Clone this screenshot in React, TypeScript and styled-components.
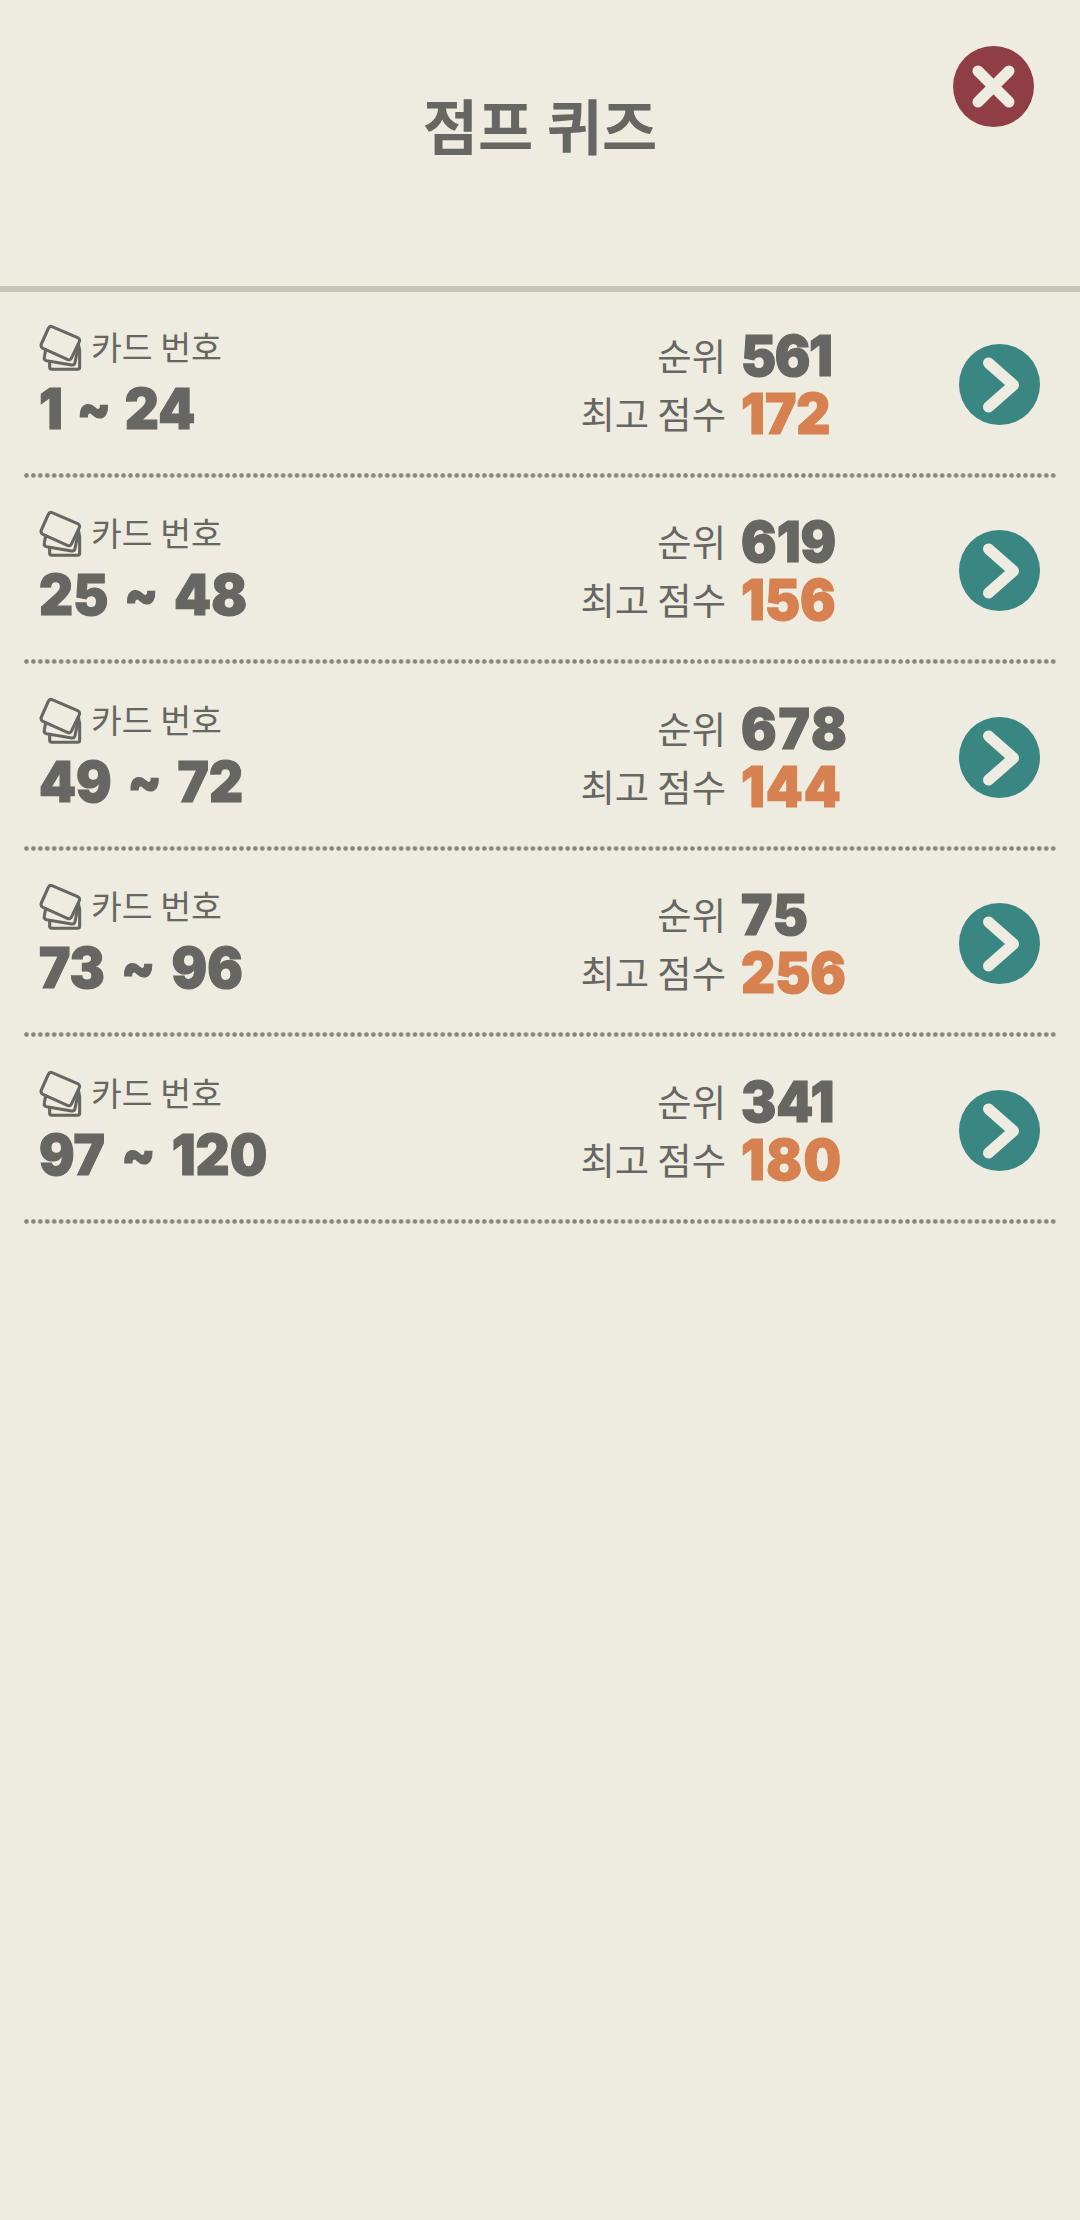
import React from 'react';
import styled, { createGlobalStyle } from 'styled-components';

const ink = '#666662';
const paper = '#eeece0';

const GlobalStyle = createGlobalStyle`
  body { margin: 0; background: ${paper}; }
`;

const Screen = styled.main`
  box-sizing: border-box;
  width: 1080px;
  height: 2220px;
  background: ${paper};
  color: ${ink};
  font-family: 'Noto Sans CJK KR', sans-serif;
`;

const Header = styled.header`
  box-sizing: border-box;
  display: grid;
  grid-template-columns: 1fr auto 1fr;
  height: 292px;
  padding: 46px 46px 0;
  border-bottom: 6px solid #c9c4b8;
`;

const Title = styled.h1`
  grid-column: 2;
  margin: 33px 0 0;
  height: 90px;
  line-height: 90px;
  font-size: 60px;
  font-weight: 700;
`;

const RoundButton = styled.button<{ $color: string }>`
  display: block;
  flex: none;
  justify-self: end;
  width: 81px;
  height: 81px;
  padding: 0;
  border: 0;
  border-radius: 50%;
  background: ${(p) => p.$color};
`;

const Glyph = styled.svg`
  display: block;
  width: 81px;
  height: 81px;
  fill: none;
  stroke: ${paper};
  stroke-linecap: round;
  stroke-linejoin: round;
`;

const List = styled.ul`
  margin: 0;
  padding: 0 24px 0 22.5px;
  list-style: none;
`;

const Row = styled.li`
  box-sizing: border-box;
  display: flex;
  align-items: flex-start;
  height: 186.4px;
  padding: 0 16px 0 16.5px;
  background: radial-gradient(circle, #85847d 1.7px, rgba(133, 132, 125, 0) 2.9px) 0 180px / 6.941px 6.941px repeat-x;
`;

const Range = styled.div`
  display: flex;
  flex-direction: column;
  width: 501px;
  padding-top: 32px;
`;

const Caption = styled.div`
  display: flex;
  align-items: flex-start;
  gap: 9px;
  height: 48px;
  font-size: 33.5px;
  line-height: 44px;
`;

const CardsIcon = styled.svg`
  flex: none;
  width: 43px;
  height: 48px;
  fill: none;
  stroke: ${ink};
  stroke-width: 9.2;
  stroke-linejoin: round;
  stroke-linecap: round;
`;

const Figure = styled.span<{ $spacing?: number; $accent?: boolean }>`
  justify-self: start;
  align-self: flex-start;
  font-family: Inter, sans-serif;
  font-size: 56.5px;
  font-weight: 900;
  line-height: 58px;
  white-space: pre;
  letter-spacing: ${(p) => p.$spacing ?? 0}px;
  color: ${(p) => (p.$accent ? '#d6814f' : ink)};
  -webkit-text-stroke: 1.2px currentColor;
  transform: scaleX(0.935);
  transform-origin: left;
`;

const RangeFigure = styled(Figure)<{ $gap: number }>`
  margin-top: 8px;
  word-spacing: ${(p) => p.$gap}px;
`;

const Tilde = styled.span`
  font-size: 53px;
  line-height: 1;
  vertical-align: 2px;
`;

const Stats = styled.div`
  display: grid;
  grid-template-columns: 186px 1fr;
  grid-auto-rows: 58px;
  column-gap: 15px;
  flex: 1;
  padding-top: 35px;
`;

const StatLabel = styled.span`
  font-size: 37.3px;
  line-height: 56px;
  text-align: right;
`;

const Action = styled.div`
  padding-top: 52px;
`;

type Value = { text: string; spacing?: number };

const rows: { from: string; to: string; gap: number; rank: Value; best: Value }[] = [
  { from: '1', to: '24', gap: 3.5, rank: { text: '561', spacing: -1.5 }, best: { text: '172' } },
  { from: '25', to: '48', gap: 5.5, rank: { text: '619' }, best: { text: '156' } },
  { from: '49', to: '72', gap: 5.5, rank: { text: '678', spacing: 2 }, best: { text: '144', spacing: 1 } },
  { from: '73', to: '96', gap: 6, rank: { text: '75', spacing: 1 }, best: { text: '256' } },
  { from: '97', to: '120', gap: 6, rank: { text: '341' }, best: { text: '180', spacing: 1.5 } },
];

const Cards = () => (
  <CardsIcon viewBox="117 162 129 144">
    <path d="M156 170 L233 203 Q241 207 238 215 L215 263 Q211 272 202 268 L129 235 Q121 231 124 222 L145 175 Q149 167 156 170Z" />
    <path d="M137 239 L133 261 Q131 270 140 272 L215 285 Q223 286 225 278 L236 224" />
    <path d="M149 278 V291 Q149 298 156 298 H232 Q239 298 239 291 V240 L235 224" />
  </CardsIcon>
);

export default function App() {
  return (
    <Screen>
      <GlobalStyle />
      <Header>
        <Title>점프 퀴즈</Title>
        <RoundButton $color="#903e45" aria-label="닫기">
          <Glyph viewBox="0 0 81 81" strokeWidth="11">
            <path d="M25 25 L56 56 M56 25 L25 56" />
          </Glyph>
        </RoundButton>
      </Header>
      <List>
        {rows.map((row) => (
          <Row key={row.from}>
            <Range>
              <Caption>
                <Cards />
                카드 번호
              </Caption>
              <RangeFigure $gap={row.gap}>
                {row.from} <Tilde>~</Tilde> {row.to}
              </RangeFigure>
            </Range>
            <Stats>
              <StatLabel>순위</StatLabel>
              <Figure $spacing={row.rank.spacing}>{row.rank.text}</Figure>
              <StatLabel>최고 점수</StatLabel>
              <Figure $accent $spacing={row.best.spacing}>{row.best.text}</Figure>
            </Stats>
            <Action>
              <RoundButton $color="#3a8682" aria-label="열기">
                <Glyph viewBox="0 0 81 81" strokeWidth="11">
                  <path d="M29.5 19 L54.5 41 L29.5 63" />
                </Glyph>
              </RoundButton>
            </Action>
          </Row>
        ))}
      </List>
    </Screen>
  );
}
